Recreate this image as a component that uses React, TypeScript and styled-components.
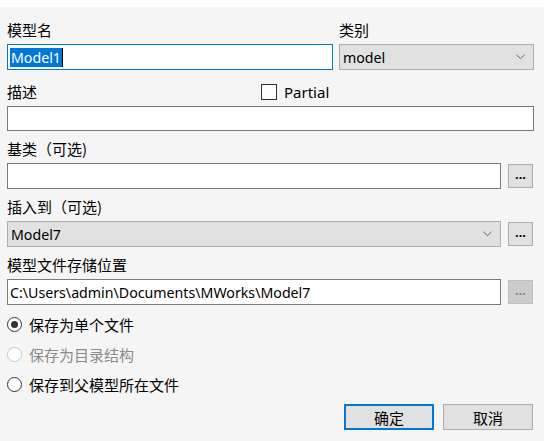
import { createGlobalStyle } from 'styled-components';
import styled from 'styled-components';

const GlobalStyle = createGlobalStyle`
  html, body {
    margin: 0;
    padding: 0;
    background: #f5f5f5;
  }
  body {
    font-family: 'Noto Sans', 'Noto Sans CJK SC', sans-serif;
    font-size: 14.2px;
    color: #000;
  }
`;

const Dialog = styled.div`
  width: 544px;
  height: 441px;
  box-sizing: border-box;
  border-top: 7px solid #ffffff;
  background: #f5f5f5;
  padding: 13px 10px 0 7px;
  display: flex;
  flex-direction: column;
`;

const Row = styled.div`
  display: flex;
  gap: 6px;
`;

const Field = styled.div<{ $width?: number }>`
  display: flex;
  flex-direction: column;
  width: ${(p) => (p.$width ? `${p.$width}px` : 'auto')};
  flex: ${(p) => (p.$width ? 'none' : '1')};
`;

const Section = styled.div<{ $top: number }>`
  display: flex;
  flex-direction: column;
  margin-top: ${(p) => p.$top}px;
`;

const LabelRow = styled.div`
  display: flex;
  align-items: center;
  height: 20px;
  margin-bottom: 4px;
`;

const Label = styled.label`
  font-family: 'Noto Sans CJK SC', sans-serif;
  font-size: 15px;
  line-height: 20px;
  white-space: nowrap;
`;

const TextBox = styled.div<{ $focused?: boolean; $height?: number }>`
  height: ${(p) => p.$height ?? 26}px;
  box-sizing: border-box;
  background: #fff;
  border: 1px solid ${(p) => (p.$focused ? '#0078d7' : '#7a7a7a')};
  display: flex;
  align-items: center;
  padding-left: 2px;
  white-space: nowrap;
  overflow: hidden;
`;

const Selected = styled.span`
  background: #0078d7;
  color: #fff;
  line-height: 19px;
  padding: 0 1px;
  border-right: 1px solid #000;
`;

const Combo = styled.div`
  height: 26px;
  box-sizing: border-box;
  background: #e1e1e1;
  border: 1px solid #adadad;
  display: flex;
  align-items: center;
  justify-content: space-between;
  padding: 0 8px 0 3px;
`;

const Chevron = () => (
  <svg width="9" height="6" viewBox="0 0 9 6">
    <path d="M0.5 0.8 L4.5 4.6 L8.5 0.8" fill="none" stroke="#606060" strokeWidth="1" />
  </svg>
);

const Check = styled.span`
  width: 16px;
  height: 16px;
  box-sizing: border-box;
  border: 1px solid #333;
  background: #fff;
  margin-right: 7px;
`;

const CheckLabel = styled.label`
  display: flex;
  align-items: center;
  margin-left: 224px;
  font-size: 15px;
`;

const PickRow = styled.div`
  display: flex;
  align-items: center;
  gap: 7px;
  & > :first-child {
    flex: 1;
  }
`;

const Browse = styled.button<{ $disabled?: boolean }>`
  width: 25px;
  height: 24px;
  padding: 0 0 6px;
  margin-right: 1px;
  box-sizing: border-box;
  background: ${(p) => (p.$disabled ? '#cccccc' : '#e1e1e1')};
  border: 1px solid ${(p) => (p.$disabled ? '#bfbfbf' : '#adadad')};
  color: ${(p) => (p.$disabled ? '#838383' : '#000')};
  font-family: 'Noto Sans', sans-serif;
  font-size: 13px;
  font-weight: bold;
  line-height: 1;
  display: flex;
  align-items: flex-end;
  justify-content: center;
`;

const Options = styled.div`
  display: flex;
  flex-direction: column;
  gap: 12px;
  margin-top: 10px;
`;

const RadioRow = styled.label<{ $disabled?: boolean }>`
  display: flex;
  align-items: center;
  height: 18px;
  font-family: 'Noto Sans CJK SC', sans-serif;
  font-size: 15px;
  color: ${(p) => (p.$disabled ? '#8a8a8a' : '#000')};
`;

const RadioDot = styled.span<{ $checked?: boolean; $disabled?: boolean }>`
  width: 15px;
  height: 15px;
  box-sizing: border-box;
  border-radius: 50%;
  border: 1px solid ${(p) => (p.$disabled ? '#c6c6c6' : '#333')};
  background: #fff;
  margin-right: 7px;
  display: flex;
  align-items: center;
  justify-content: center;
  &::after {
    content: '';
    width: 7px;
    height: 7px;
    border-radius: 50%;
    background: ${(p) => (p.$checked ? '#333' : 'transparent')};
  }
`;

const Footer = styled.div`
  display: flex;
  justify-content: flex-end;
  gap: 9px;
  margin-top: 11px;
  padding-right: 1px;
`;

const DlgButton = styled.button<{ $primary?: boolean }>`
  width: 90px;
  height: 26px;
  box-sizing: border-box;
  background: #e1e1e1;
  border: ${(p) => (p.$primary ? '2px solid #0078d7' : '1px solid #adadad')};
  font-family: 'Noto Sans CJK SC', sans-serif;
  font-size: 15px;
  color: #000;
  padding: 0;
`;

export default function App() {
  return (
    <>
      <GlobalStyle />
      <Dialog>
        <Row>
          <Field>
            <LabelRow>
              <Label>模型名</Label>
            </LabelRow>
            <TextBox $focused>
              <Selected>Model1</Selected>
            </TextBox>
          </Field>
          <Field $width={195}>
            <LabelRow>
              <Label>类别</Label>
            </LabelRow>
            <Combo>
              <span>model</span>
              <Chevron />
            </Combo>
          </Field>
        </Row>

        <Section $top={12}>
          <LabelRow>
            <Label>描述</Label>
            <CheckLabel>
              <Check />
              Partial
            </CheckLabel>
          </LabelRow>
          <TextBox $height={25} />
        </Section>

        <Section $top={8}>
          <LabelRow>
            <Label>基类（可选)</Label>
          </LabelRow>
          <PickRow>
            <TextBox />
            <Browse>...</Browse>
          </PickRow>
        </Section>

        <Section $top={8}>
          <LabelRow>
            <Label>插入到（可选)</Label>
          </LabelRow>
          <PickRow>
            <Combo>
              <span>Model7</span>
              <Chevron />
            </Combo>
            <Browse>...</Browse>
          </PickRow>
        </Section>

        <Section $top={8}>
          <LabelRow>
            <Label>模型文件存储位置</Label>
          </LabelRow>
          <PickRow>
            <TextBox>C:\Users\admin\Documents\MWorks\Model7</TextBox>
            <Browse $disabled>...</Browse>
          </PickRow>
        </Section>

        <Options>
          <RadioRow>
            <RadioDot $checked />
            保存为单个文件
          </RadioRow>
          <RadioRow $disabled>
            <RadioDot $disabled />
            保存为目录结构
          </RadioRow>
          <RadioRow>
            <RadioDot />
            保存到父模型所在文件
          </RadioRow>
        </Options>

        <Footer>
          <DlgButton $primary>确定</DlgButton>
          <DlgButton>取消</DlgButton>
        </Footer>
      </Dialog>
    </>
  );
}
